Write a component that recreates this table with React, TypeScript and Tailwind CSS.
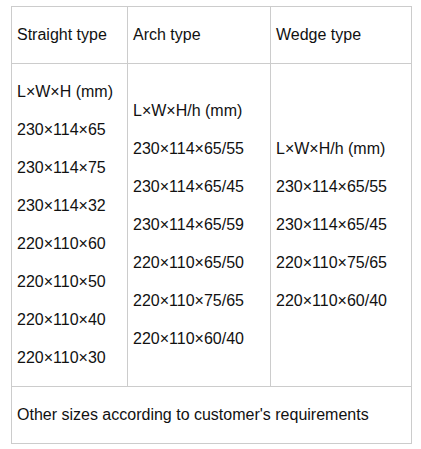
const straight = ["L×W×H (mm)", "230×114×65", "230×114×75", "230×114×32", "220×110×60", "220×110×50", "220×110×40", "220×110×30"];
const arch = ["L×W×H/h (mm)", "230×114×65/55", "230×114×65/45", "230×114×65/59", "220×110×65/50", "220×110×75/65", "220×110×60/40"];
const wedge = ["L×W×H/h (mm)", "230×114×65/55", "230×114×65/45", "220×110×75/65", "220×110×60/40"];

function Cell({ lines, className }: { lines: string[]; className: string }) {
  return (
    <div className={`flex flex-col justify-center gap-[14px] px-[5px] ${className}`}>
      {lines.map((line) => (
        <p key={line} className="leading-[24px]">
          {line}
        </p>
      ))}
    </div>
  );
}

export default function App() {
  return (
    <div className="h-[449px] w-[421px] bg-white pt-[6px] pl-[11px] font-['Liberation_Sans',Arial,sans-serif] text-[16px] text-[#111]">
      <div className="w-[401px] border border-[#cccccc]">
        <div className="grid h-[57px] grid-cols-[116px_143px_140px] border-b border-[#cccccc]">
          <div className="flex items-center border-r border-[#cccccc] px-[5px]">Straight type</div>
          <div className="flex items-center border-r border-[#cccccc] px-[5px]">Arch type</div>
          <div className="flex items-center px-[5px]">Wedge type</div>
        </div>
        <div className="grid h-[323px] grid-cols-[116px_143px_140px] border-b border-[#cccccc]">
          <Cell lines={straight} className="border-r border-[#cccccc]" />
          <Cell lines={arch} className="border-r border-[#cccccc]" />
          <Cell lines={wedge} className="" />
        </div>
        <div className="flex h-[56px] items-center px-[5px]">
          Other sizes according to customer's requirements
        </div>
      </div>
    </div>
  );
}
